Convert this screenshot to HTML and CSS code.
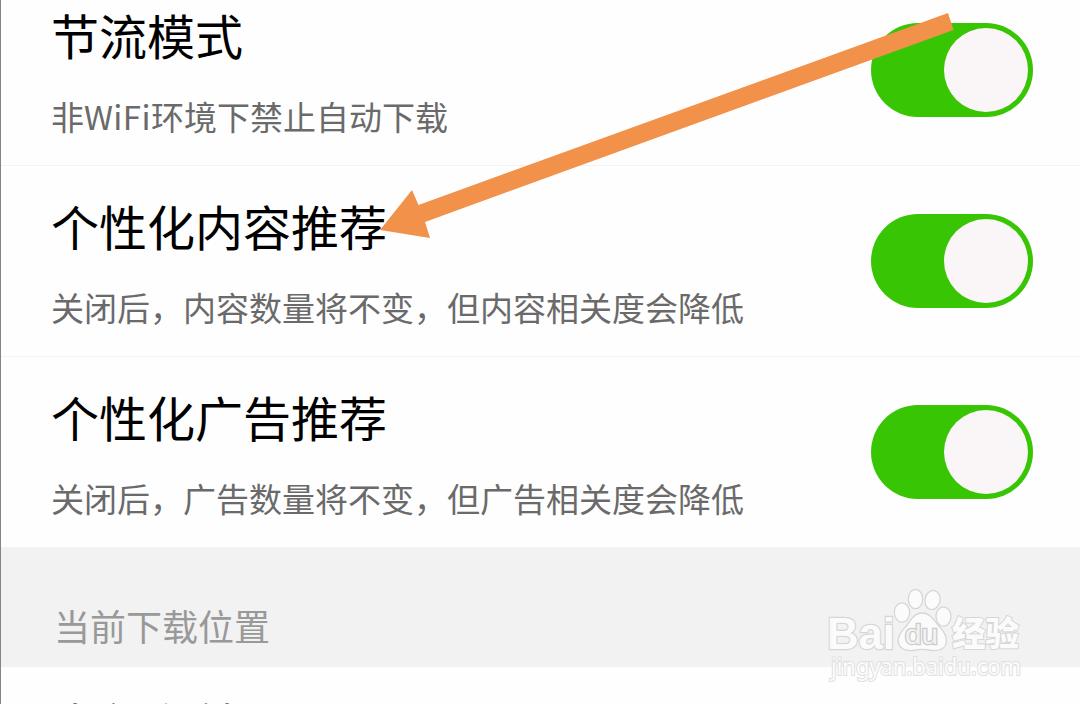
FILE: index.html
```html
<!DOCTYPE html>
<html lang="zh-CN">

<head>
    <meta charset="UTF-8">
    <meta name="viewport" content="width=device-width, initial-scale=1">
    <title>设置</title>
    <link rel="stylesheet" href="styles.css">
</head>

<body>

    <div class="settings">
        <div class="row">
            <div class="row-text">
                <h2>节流模式</h2>
                <p>非<span class="latin">WiFi</span>环境下禁止自动下载</p>
            </div>
            <div class="switch"></div>
        </div>
        <div class="row">
            <div class="row-text">
                <h2>个性化内容推荐</h2>
                <p>关闭后，内容数量将不变，但内容相关度会降低</p>
            </div>
            <div class="switch"></div>
        </div>
        <div class="row last">
            <div class="row-text">
                <h2>个性化广告推荐</h2>
                <p>关闭后，广告数量将不变，但广告相关度会降低</p>
            </div>
            <div class="switch"></div>
        </div>
        <div class="section-title">当前下载位置</div>
        <div class="row storage">
            <div class="row-text">
                <h2>内部存储</h2>
            </div>
        </div>
    </div>

    <svg class="arrow" width="1080" height="704" viewBox="0 0 1080 704">
        <polygon points="380,230 412,190 418.5,205 948,13 953.5,30 425,222 430,238" />
    </svg>

    <svg class="watermark" width="210" height="110" viewBox="820 580 210 110">
        <text class="brand" x="827" y="648.5" textLength="68" lengthAdjust="spacingAndGlyphs">Bai</text>
        <ellipse cx="902" cy="612.5" rx="7.7" ry="9.7" />
        <ellipse cx="915.5" cy="599" rx="7.2" ry="9.7" />
        <ellipse cx="932.5" cy="600" rx="7.5" ry="9.7" transform="rotate(12 932.5 600)" />
        <ellipse cx="943.5" cy="616.5" rx="7.5" ry="9.7" />
        <path d="M922 613 C930 613 934 620 938 625 C943 630 947 635 946.5 642 C945 650 938 651 932 650.5 C925 649 919 649 913 650.5 C905 651 899 649 898 641 C898 634 903 630 907 625 C911 619 915 613 922 613Z" />
        <text class="du" x="905" y="644" textLength="33" lengthAdjust="spacingAndGlyphs">du</text>
        <text class="cn" x="952" y="646" textLength="67" lengthAdjust="spacingAndGlyphs">经验</text>
        <text class="url" x="831" y="674.5" textLength="190" lengthAdjust="spacingAndGlyphs">jingyan.baidu.com</text>
    </svg>

</body>

</html>
```

FILE: styles.css
```css
body {
    margin: 0;
    height: 704px;
    overflow: hidden;
    position: relative;
    background-color: #fefefe;
    font-family: "Noto Sans CJK SC", sans-serif;
}

.settings {
    height: 704px;
    box-sizing: border-box;
    border-left: 1px solid #858585;
    display: flex;
    flex-direction: column;
    overflow: hidden;
}

.row {
    display: flex;
    flex-shrink: 0;
    justify-content: space-between;
    align-items: center;
    height: 191px;
    box-sizing: border-box;
    padding: 0 47px 0 50px;
    border-bottom: 1px solid #f3f3f3;
}

.row:first-child {
    margin-top: -25px;
}

.row.last {
    height: 190px;
    border-bottom: none;
}

.row-text {
    display: flex;
    flex-direction: column;
    gap: 32px;
}

.row h2 {
    margin: 0;
    font-size: 48px;
    line-height: 60px;
    font-weight: 400;
    color: #000;
}

.row p {
    margin: 0;
    font-size: 33px;
    line-height: 40px;
    font-weight: 400;
    color: #6a6a6a;
}

.latin {
    letter-spacing: 0.4px;
}

.switch {
    display: flex;
    justify-content: flex-end;
    width: 162px;
    height: 94px;
    box-sizing: border-box;
    padding: 5px;
    border-radius: 47px;
    background-color: #38c503;
}

.switch::after {
    content: "";
    width: 84px;
    height: 84px;
    border-radius: 50%;
    background-color: #faf6f8;
}

.section-title {
    flex-shrink: 0;
    height: 120px;
    box-sizing: border-box;
    padding: 53px 0 0 53px;
    font-size: 36px;
    line-height: 50px;
    color: #999;
    background-color: #f2f2f2;
}

.storage {
    align-items: flex-start;
    border-bottom: none;
}

.storage .row-text {
    padding-top: 26px;
}

.arrow {
    position: absolute;
    top: 0;
    left: 0;
    fill: #f2914a;
}

.watermark {
    position: absolute;
    top: 580px;
    left: 820px;
    fill: #fbfbfb;
    stroke: #d6d6d6;
    stroke-width: 1.3px;
}

.watermark text {
    paint-order: stroke;
    font-family: "Liberation Sans", sans-serif;
}

.watermark .brand {
    font-size: 45px;
    font-weight: 700;
    stroke-width: 2.4px;
}

.watermark .du {
    font-size: 27px;
    font-weight: 400;
    fill: #f2f2f2;
    stroke: #cccccc;
    stroke-width: 2.5px;
}

.watermark .cn {
    font-family: "Noto Sans CJK SC", sans-serif;
    font-size: 34px;
    font-weight: 900;
    stroke-width: 2px;
}

.watermark .url {
    font-family: "Noto Sans", sans-serif;
    font-size: 23px;
    font-weight: 400;
    stroke: #e0e0e0;
    stroke-width: 2px;
}
```
